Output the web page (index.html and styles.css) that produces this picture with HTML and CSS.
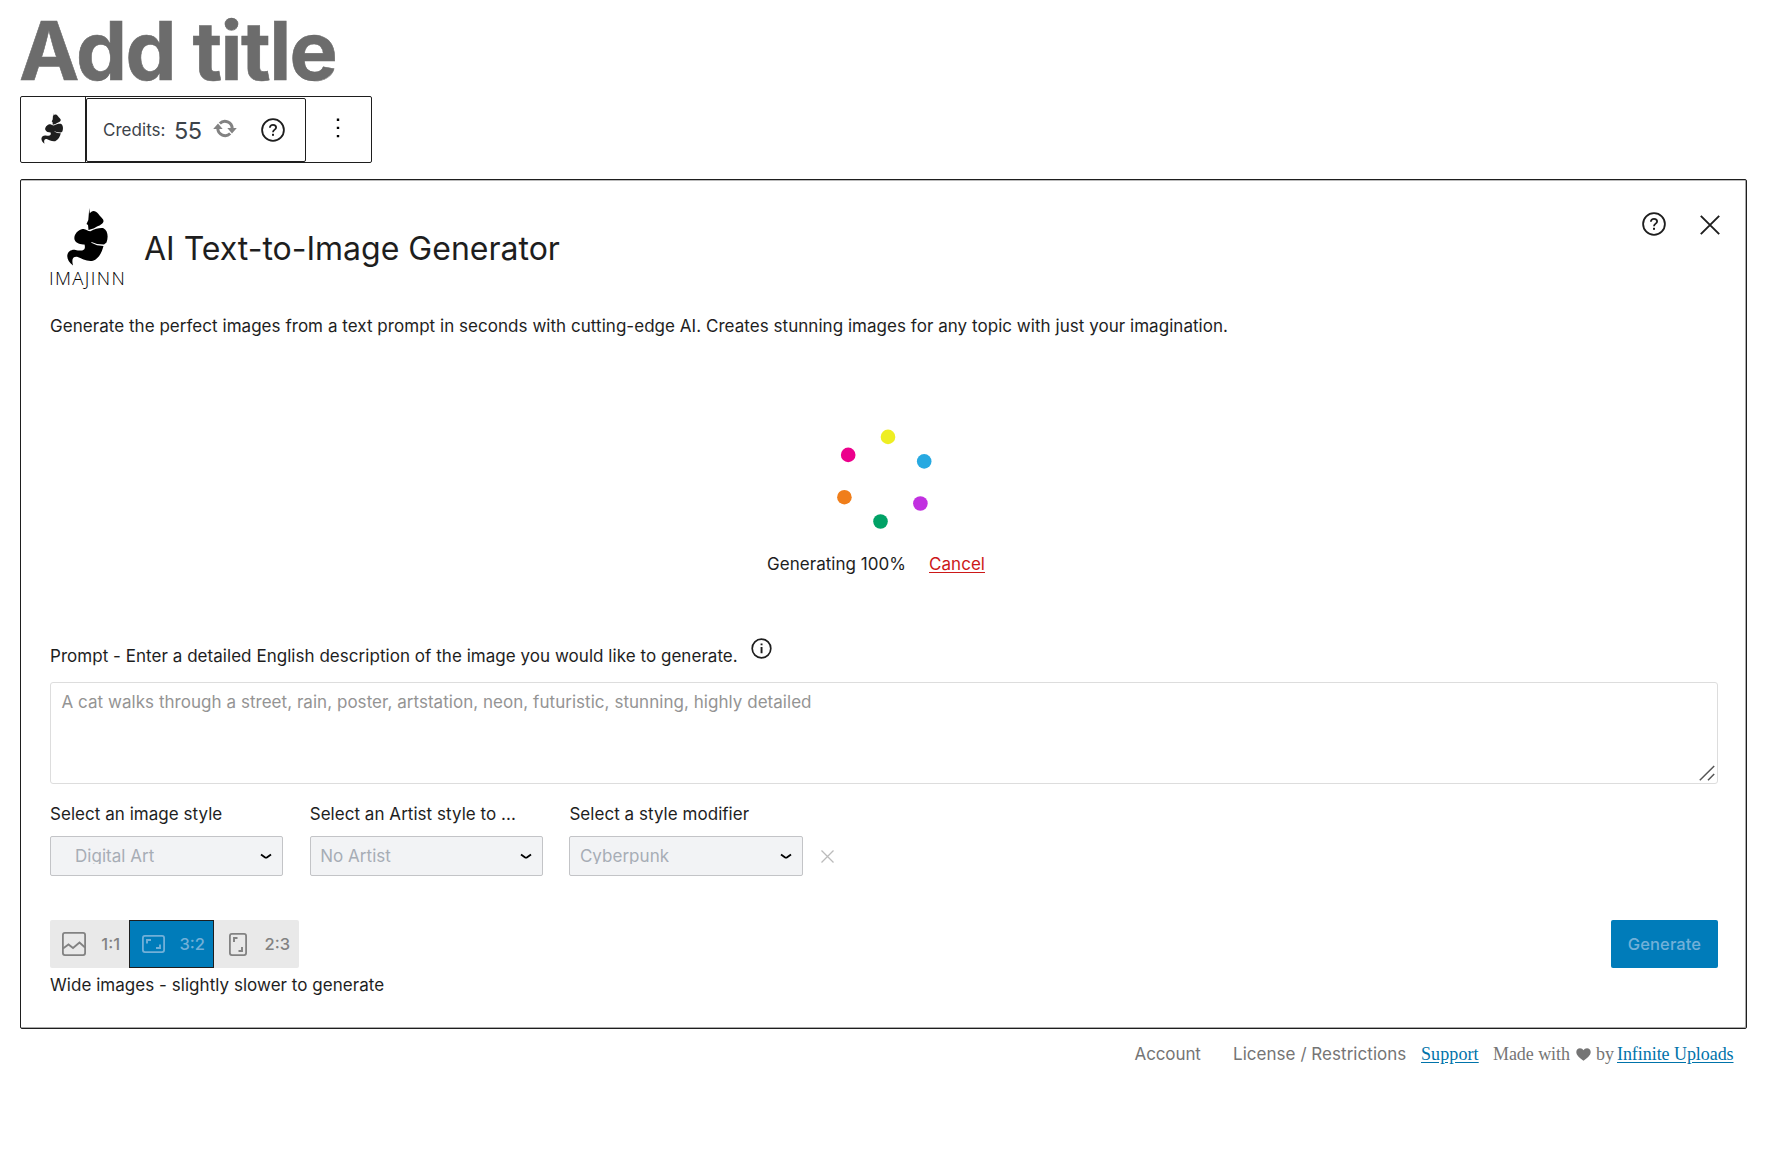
FILE: index.html
```html
<!DOCTYPE html>
<html lang="en">
<head>
<meta charset="utf-8">
<title>Imajinn</title>
<link rel="stylesheet" href="styles.css">
</head>
<body>
<svg width="0" height="0" class="defs">
  <symbol id="genie" viewBox="0 0 42 58">
    <path d="M22.300 0L22.800 5.500C24.500 2 28.500 2 31 5.500C33 8.500 37 11 36.500 13.500C35.500 17 30.500 18 26.500 20.500L21.500 22L21 17L19.500 16L21.300 12Z"/>
    <path d="M7.500 31.500C6.500 27 10.500 22 15.500 21C19 20.300 20.500 23.300 23.500 23.300C28 20.800 33 19.600 36.500 20.200C41 22.500 41.500 29 39.500 34.500L37 36.500L30 36L24.500 34L24.300 34.700L30 37.300L36.500 38C35 44 32 50.500 26 52.800C20 54 15 50.500 10 48.800C5.500 48.500 4.500 51.500 6 57.500C2 54 0 51 .3 47.500C.8 43.500 4.500 41.300 8.500 42C13.500 43 19.500 43.500 17.500 36.500C14 36.500 8.500 35.500 7.500 31.500Z"/>
  </symbol>
  <symbol id="help" viewBox="0 0 24 24">
    <circle cx="12" cy="12" r="10.900" fill="none" stroke="currentColor" stroke-width="1.800"/>
    <path d="M8.900 9.700C8.900 7.900 10.200 6.800 12 6.800S15.100 7.900 15.100 9.500C15.100 11.600 12 11.700 12 14.200" fill="none" stroke="currentColor" stroke-width="1.800"/>
    <rect x="11" y="15.800" width="2" height="2" fill="currentColor"/>
  </symbol>
  <symbol id="chev" viewBox="0 0 12 7"><path d="M1 1.500L4.800 4.300Q6 5.100 7.200 4.300L11 1.500" fill="none" stroke="#000" stroke-width="1.800"/></symbol>
</svg>
<h1 class="title"><span>Add title</span></h1>
<div class="toolbar">
  <div class="block-icon"><svg width="23" height="31"><use href="#genie"/></svg></div>
  <div class="credits">
    <span class="credits-label">Credits:</span>
    <span class="credits-count">55</span>
    <svg class="sync" width="24" height="20" viewBox="0 0 24 20"><path d="M6.800 4.500A7.300 7.300 0 0 1 19.200 9.500M4.800 9.500A7.300 7.300 0 0 0 17.200 14.500" fill="none" stroke="#828282" stroke-width="3"/><path d="M14.300 9H23.800L19 14.500ZM.2 10H9.700L5 4.500Z" fill="#828282"/></svg>
    <svg class="credits-help" width="24" height="24"><use href="#help"/></svg>
  </div>
  <div class="more"><svg width="4" height="20" viewBox="0 0 4 20"><path d="M.8 .5h2.400v2.400H.8zM.8 8.700h2.400v2.400H.8zM.8 16.900h2.400v2.400H.8z"/></svg></div>
</div>
<main class="panel">
  <header class="head">
    <div class="logo"><svg width="42" height="58"><use href="#genie"/></svg><span class="logo-name">IMAJINN</span></div>
    <h2 class="heading"><span>AI Text-to-Image Generator</span></h2>
    <svg class="head-help" width="24" height="24"><use href="#help"/></svg>
    <svg class="head-close" width="20" height="20" viewBox="0 0 20 20"><path d="M.8.8L19.200 19.200M19.200.8L.8 19.200" fill="none" stroke="#1e1e1e" stroke-width="1.900"/></svg>
  </header>
  <p class="intro"><span>Generate the perfect images from a text prompt in seconds with cutting-edge AI. Creates stunning images for any topic with just your imagination.</span></p>
  <svg class="spinner" width="96" height="102" viewBox="836 428 96 102"><circle cx="888" cy="436.900" r="7.300" fill="#eeee22"/><circle cx="848.200" cy="454.900" r="7.300" fill="#ec008c"/><circle cx="924.200" cy="461.400" r="7.300" fill="#27a9e1"/><circle cx="844.400" cy="497.200" r="7.300" fill="#f07e1a"/><circle cx="920.400" cy="503.500" r="7.300" fill="#c130e0"/><circle cx="880.500" cy="521.500" r="7.300" fill="#00a266"/></svg>
  <div class="status"><span class="progress">Generating 100%</span><a class="cancel">Cancel</a></div>
  <div class="prompt-label"><span>Prompt - Enter a detailed English description of the image you would like to generate.</span>
    <svg class="info" width="21" height="21" viewBox="0 0 21 21"><circle cx="10.500" cy="10.500" r="9.300" fill="none" stroke="#1e1e1e" stroke-width="1.700"/><path d="M9.600 9h1.900v6.300H9.600zM9.600 5.400h1.900v1.900H9.600z" fill="#1e1e1e"/></svg></div>
  <div class="prompt"><span>A cat walks through a street, rain, poster, artstation, neon, futuristic, stunning, highly detailed</span>
    <svg class="grip" width="16" height="16" viewBox="0 0 16 16"><path d="M.8 15.200L15.200 1M9 15.200L15.200 9" fill="none" stroke="#555" stroke-width="1.500"/></svg></div>
  <div class="selects">
    <div class="field"><label>Select an image style</label><div class="select indent"><span>Digital Art</span><svg width="12" height="7"><use href="#chev"/></svg></div></div>
    <div class="field"><label>Select an Artist style to ...</label><div class="select"><span>No Artist</span><svg width="12" height="7"><use href="#chev"/></svg></div></div>
    <div class="field"><label>Select a style modifier</label><div class="select"><span>Cyberpunk</span><svg width="12" height="7"><use href="#chev"/></svg></div></div>
    <svg class="clear" width="13" height="13" viewBox="0 0 13 13"><path d="M.5.500L12.500 12.500M12.500.5L.5 12.500" fill="none" stroke="#bbb" stroke-width="1.300"/></svg>
  </div>
  <div class="actions">
    <div class="ratios">
      <div class="ratio square"><svg width="24" height="24" viewBox="0 0 24 24"><rect x=".9" y=".9" width="22.200" height="22.200" rx="2" fill="none" stroke="currentColor" stroke-width="1.800"/><path d="M1 16.500L6.500 12.500L11 16L17.500 10.500L23 15.500" fill="none" stroke="currentColor" stroke-width="1.800"/></svg><span>1:1</span></div>
      <div class="ratio wide"><svg width="23" height="18" viewBox="0 0 23 18"><rect x=".9" y=".9" width="21.200" height="16.200" rx="2" fill="none" stroke="currentColor" stroke-width="1.800"/><path d="M5 8.500V5H9M18 9.500V13H14" fill="none" stroke="currentColor" stroke-width="1.900"/></svg><span>3:2</span></div>
      <div class="ratio tall"><svg width="18" height="23" viewBox="0 0 18 23"><rect x=".9" y=".9" width="16.200" height="21.200" rx="2" fill="none" stroke="currentColor" stroke-width="1.800"/><path d="M5 9V5H8.500M13 14V18H9.500" fill="none" stroke="currentColor" stroke-width="1.900"/></svg><span>2:3</span></div>
    </div>
    <div class="generate"><span>Generate</span></div>
  </div>
  <p class="hint"><span>Wide images - slightly slower to generate</span></p>
</main>
<footer class="foot">
  <span class="account">Account</span><span class="license">License / Restrictions</span><a class="support">Support</a>
  <span class="made">Made with</span><svg class="heart" width="15" height="13" viewBox="0 0 15 13"><path d="M7.500 12.800C4 10 .3 7.500.3 4C.3 1.500 2 .2 4 .2C5.500.2 6.800 1 7.500 2.200C8.200 1 9.500.2 11 .2C13 .2 14.700 1.500 14.700 4C14.700 7.500 11 10 7.500 12.800Z" fill="#757575"/></svg><span class="by">by</span><a class="uploads">Infinite Uploads</a>
</footer>
</body>
</html>
```
FILE: styles.css
```css
* { box-sizing: border-box; margin: 0; padding: 0; }
body { width: 1772px; height: 1162px; overflow: hidden; background: #fff; padding: 0 25px 0 20px; font-family: Inter, "Liberation Sans", sans-serif; font-size: 17px; line-height: 24px; letter-spacing: .04px; color: #1e1e1e; }
svg { flex: none; display: block; }
span, a, label { white-space: nowrap; }
.defs { position: absolute; }
.title { height: 96px; margin-left: -1px; font-size: 81px; font-weight: 700; line-height: 102px; letter-spacing: -1.6px; color: #6c6c6c; -webkit-text-stroke: .6px #6c6c6c; }
.toolbar { display: flex; width: 352px; height: 67px; border: 1px solid #1e1e1e; border-radius: 2px; }
.block-icon { width: 65px; padding: 16px 0 0 20px; border-right: 1px solid #1e1e1e; }
.block-icon svg { fill: #1e1e1e; }
.credits { display: flex; width: 220px; height: 64px; margin-top: 1px; border: 1px solid #1e1e1e; border-radius: 2px; padding-left: 16px; color: #3c434a; }
.credits-label { width: 71px; padding-top: 19px; }
.credits-count { width: 39px; padding-top: 20px; font-size: 23.5px; letter-spacing: -.5px; }
.sync { margin-top: 20px; }
.credits-help { margin: 19px 0 0 24px; color: #1e1e1e; }
.more { padding: 21px 0 0 30px; }
.panel { margin-top: 16px; height: 850px; padding: 28px 28px 0 29px; border: 1px solid #1e1e1e; border-radius: 2px; box-shadow: inset -1px -1px 0 #aaa, inset 0 1px 0 #bbb; }
.head { display: flex; height: 106px; }
.logo { width: 94px; }
.logo > svg { margin-left: 17px; }
.logo-name { display: block; margin-left: -1px; font-family: "Open Sans", sans-serif; font-weight: 300; font-size: 18.5px; line-height: 24px; letter-spacing: 1.35px; color: #000; }
.heading { flex: 1; font-size: 32px; font-weight: 400; line-height: 40px; letter-spacing: 0; margin-top: 21px; }
.head-help { margin: 4px 34px 0 0; }
.head-close { margin: 7px -2px 0 0; }
.intro { height: 114px; }
.spinner { margin-left: 786px; }
.status { display: flex; margin: 22px 0 68px 717px; }
.progress { width: 162px; }
.cancel { color: #cc1818; text-decoration: underline; text-underline-offset: 2px; }
.prompt-label { display: flex; height: 38px; }
.prompt-label span { width: 701px; }
.info { margin-top: -6px; }
.prompt { display: flex; justify-content: space-between; align-items: flex-end; height: 102px; border: 1px solid #ddd; border-radius: 3px; color: #949494; padding: 7px 2px 2px 10.5px; }
.prompt span { align-self: flex-start; }
.selects { display: flex; gap: 26.4px; height: 136px; padding-top: 18px; }
.field { width: 233.3px; }
.field label { display: block; }
.select { display: flex; justify-content: space-between; align-items: center; height: 40px; margin-top: 10px; border: 1px solid #c3c4c7; border-radius: 2px; background: #f2f3f5; color: #a7adb5; padding: 0 10px 0 9.5px; }
.select span { clip-path: inset(0 0 4px 0); }
.indent { padding-left: 24px; }
.clear { margin: 48px 0 0 -8.5px; }
.actions { display: flex; justify-content: space-between; height: 48px; font-size: 16.5px; letter-spacing: 0; }
.ratios { display: flex; background: #e9e9e9; border-radius: 2px; color: #828282; font-weight: 500; }
.ratio { display: flex; align-items: center; justify-content: space-between; }
.square { width: 79px; padding: 0 9px 0 12px; }
.wide { width: 85px; padding: 0 8px 0 12px; background: #007cba; border: 1px solid #1e1e1e; color: #72b0d8; }
.tall { width: 85px; padding: 0 9px 0 15px; }
.generate { display: flex; align-items: center; justify-content: center; width: 107px; background: #007cba; border-radius: 2px; color: #72b0d8; font-weight: 500; letter-spacing: .1px; }
.hint { padding-top: 5px; }
.foot { display: flex; height: 30px; padding: 13px 0 0 1114.5px; color: #757575; }
.account { width: 98.5px; letter-spacing: -.1px; }
.license { width: 188px; }
.support, .made, .by, .uploads { font-family: "Liberation Serif", serif; font-size: 18px; letter-spacing: -.06px; }
.support { width: 72px; letter-spacing: .1px; }
.support, .uploads { color: #0073aa; text-decoration: underline; text-underline-offset: 2px; }
.made { width: 83px; }
.heart { margin: 6px 5px 0 0; }
.by { width: 21px; }
```
